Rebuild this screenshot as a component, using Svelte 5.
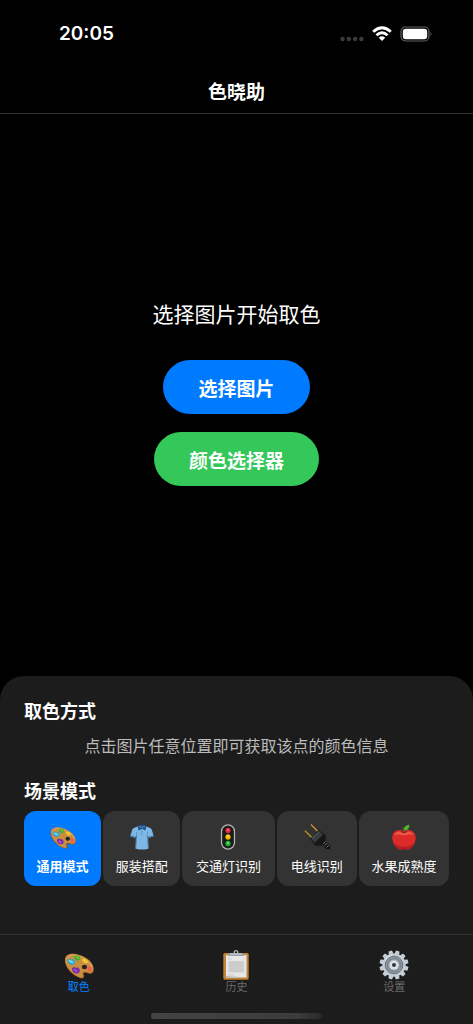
<script>
  const modes = ['通用模式', '服装搭配', '交通灯识别', '电线识别', '水果成熟度'];
  const icons = ['palette', 'shirt', 'light', 'plug', 'apple'];
  const tabs = [
    { label: '取色', icon: 'palette' },
    { label: '历史', icon: 'clipboard' },
    { label: '设置', icon: 'gear' }
  ];
  const teeth = Array.from({ length: 12 }, (_, i) => i * 30);
  let mode = $state(0);
  let tab = $state(0);
</script>

{#snippet glyph(name)}
  <svg class="glyph" viewBox="0 0 30 30" aria-hidden="true">
    {#if name === 'palette'}
      <path d="M1 11C1 6 5 4.500 10 5C18 5.400 29 11 29.500 19C30 23 27 25 24 23.500C21 22 19 22.500 20 25C21 28 19 29 16 28C8 25.500 1 18 1 11Z" fill="#8f531c" />
      <g transform="translate(0 1.500)">
        <path d="M1 8C1 4 5 2 10 2.300C18 3 29 9 29.500 16.500C30 21 27 22.500 24 21C20 19 17.500 21 19 23.500C20 26 18 26.500 16 26C8 23 1 15 1 8Z" fill="#c98e42" />
        <path d="M3 7C5 3 10 3 15 5C22 7.500 27 11.500 28 16" fill="none" stroke="#e0ab60" stroke-width="1" />
        <ellipse cx="20.500" cy="15.500" rx="2.600" ry="2.200" fill="#29221f" />
        <path d="M4 9C5 6 7 9 9 8C12 9 11 13 8 13C5 13 4 11 4 9Z" fill="#27acd7" stroke="#27acd7" stroke-width=".8" />
        <path d="M5 9L9 11" stroke="#8be3ed" stroke-width="1.500" />
        <path d="M10 5C11 3 13 5 14 4C17 5 17 9 14 9C11 9 11 7 10 5Z" fill="#41ad2c" />
        <path d="M12 5L15 7" stroke="#91de52" stroke-width="1" />
        <path d="M18 8C20 6 24 8 24 11C21 13 19 11 18 8Z" fill="#f1c72b" />
        <path d="M24 15C27 14 29 17 27 20C25 21 23 18 24 15Z" fill="#f25a4e" />
        <path d="M8 17C10 14 11 17 14 16C17 18 16 22 13 22C10 22 8 20 8 17Z" fill="#7b2bb0" />
        <path d="M10 18L13 20" stroke="#aa62d6" stroke-width="1.500" />
      </g>
    {:else if name === 'shirt'}
      <path d="M10.500 2.500L5 5Q3.500 6 3 9L1.500 14L7 16L9 13L8 28.500Q15 30.500 22 28.500L21 13L23 16L28.500 14L27 9Q26.500 6 25 5L19.500 2.500Z" fill="#7db7e5" />
      <path d="M9 13L8.500 9M21 13L21.500 9" stroke="#5593c5" stroke-width="1" fill="none" />
      <path d="M8.500 15L7.800 28.500M21.500 15L22.200 28.500" stroke="#629ece" stroke-width="1" fill="none" />
      <path d="M10 2Q15 0 20 2L19 7.500L15 5.500L11 7.500Z" fill="#244d86" />
      <path d="M11.500 2.500Q15 5 18.500 2.500" fill="none" stroke="#4d8dc4" stroke-width="1.200" />
      <path d="M15 6V13" stroke="#5b98cd" stroke-width="1" />
      <path d="M1.800 13.500L7 15.300M23 15.300L28.200 13.500" stroke="#3f7fba" stroke-width="1.300" />
    {:else if name === 'light'}
      <rect x="7.500" y="1" width="15" height="28" rx="7.500" fill="#252525" stroke="#b4b4b4" stroke-width="1.400" />
      <rect x="9.500" y="3" width="11" height="24" rx="5.500" fill="#171a19" />
      <circle cx="15" cy="7.500" r="3.100" fill="#df263b" /><circle cx="15" cy="7" r="1.200" fill="#ff7e86" />
      <circle cx="15" cy="15" r="3.100" fill="#eeb600" /><circle cx="15" cy="14.500" r="1.200" fill="#fff05c" />
      <circle cx="15" cy="22.500" r="3.100" fill="#20ae32" /><circle cx="15" cy="22" r="1.200" fill="#7af17e" />
    {:else if name === 'plug'}
      <path d="M1 8L9 16M8 1L16 9" stroke="#5e4519" stroke-width="2.400" />
      <path d="M1 7.500L9 15.500M8 .5L16 8.500" stroke="#c9a143" stroke-width="1.200" />
      <path d="M7 17L17 7L25 13L25 20L20 25L13 25Z" fill="#15171a" />
      <path d="M8 16L17 8L22 12L12 22Z" fill="#393c3f" />
      <path d="M9 17L18 9" stroke="#5c6063" stroke-width="1" />
      <path d="M20 22L24 19L30 24V29H26Z" fill="#101112" />
      <path d="M22 23L25 20M24 25L27 22M26 27L29 24" stroke="#8f9294" stroke-width="1" />
    {:else if name === 'apple'}
      <path d="M15 8.500C9 4.500 1.500 8 1.500 16C1.500 22 5.500 29.500 11 29.500Q13 29.500 15 28.800Q17 29.500 19 29.500C24.500 29.500 28.500 22 28.500 16C28.500 8 21 4.500 15 8.500Z" fill="#dd2b2a" />
      <path d="M4 13C5 8 11 8 15 10.500C19 8 24 8 26 13C21 11 18 13 15 13C11 13 8 11 4 13Z" fill="#ee5547" />
      <path d="M3 21Q8 27 15 26Q22 27 27 21Q24 29.500 19 29.500Q17 29.500 15 28.800Q13 29.500 11 29.500Q6 29.500 3 21Z" fill="#b51d23" />
      <path d="M11.500 8.500Q15 11.500 18.500 8.500" stroke="#8d1e1b" stroke-width="1.300" fill="none" />
      <path d="M15 10Q15 6 12 3.500" stroke="#6b3d1e" stroke-width="1.500" fill="none" />
      <path d="M14.500 7.500C14 2.500 18 1.500 21 .5C22 5 19 8 14.500 7.500Z" fill="#46a72b" />
      <path d="M16 6L20 2.500" stroke="#81cf48" stroke-width="1" />
    {:else if name === 'clipboard'}
      <rect x="2.500" y="3" width="25" height="27" rx="1.500" fill="#9a6427" />
      <rect x="2.500" y="3" width="25" height="26" rx="1.500" fill="#c08439" />
      <path d="M5 5H25.500V27.500H5Z" fill="#e6e6e7" />
      <path d="M5 26L25.500 27.500H5Z" fill="#babbbf" />
      <path d="M7 9H11M7 25H13" stroke="#c9cacc" stroke-width="1" />
      <rect x="7.500" y="11" width="15.500" height="11.500" fill="#cfd0d1" />
      <path d="M8 13H22.500M8 15.500H22.500M8 18H22.500M8 20.500H22.500" stroke="#c3c4c6" stroke-width=".8" />
      <circle cx="15" cy="2.500" r="1.800" fill="none" stroke="#aeb4b9" stroke-width="1.300" />
      <path d="M6.500 6Q7.500 3 11 3H19Q22.500 3 23.500 6Z" fill="#9aa4ac" />
      <path d="M9 4H21" stroke="#cbd1d7" stroke-width="1" />
    {:else}
      {#each teeth as angle}
        <path d="M12.300 5L13.200 .5H16.800L17.700 5Z" fill="#c5ced7" transform="rotate({angle + 15} 15 15)" />
      {/each}
      <circle cx="15" cy="15" r="11.500" fill="#c3cbd3" />
      <circle cx="15" cy="15" r="8.800" fill="#8b959f" stroke="#6b757f" stroke-width="1" />
      <circle cx="15" cy="15" r="6.300" fill="#a0aab3" stroke="#6f7983" stroke-width="1" />
      <circle cx="15" cy="15" r="4.500" fill="#dbe1e5" />
      <circle cx="15" cy="15" r="2" fill="#30363b" />
      <path d="M6 11Q8 6 13 5" fill="none" stroke="#e3e8ed" stroke-width="1" />
    {/if}
  </svg>
{/snippet}

<div class="app">
  <div class="status">
    <time>20:05</time>
    <div class="signals">
      <svg class="dots" viewBox="0 0 24 6" aria-hidden="true"><g fill="#3b3b3b"><circle cx="2.500" cy="3" r="2.200"/><circle cx="8.800" cy="3" r="2.200"/><circle cx="15.100" cy="3" r="2.200"/><circle cx="21.400" cy="3" r="2.200"/></g></svg>
      <svg class="wifi" viewBox="0 0 20 16" aria-hidden="true"><g fill="none" stroke="#fff" stroke-width="2.900"><path d="M1.200 5.800Q10-2.200 18.800 5.800"/><path d="M4.500 9.300Q10 4.300 15.500 9.300"/></g><path d="M6.800 11.700Q10 9 13.200 11.700L10 15Z" fill="#fff"/></svg>
      <svg class="battery" viewBox="0 0 33 17" aria-hidden="true"><rect x="1" y="1" width="28" height="14" rx="4.500" fill="none" stroke="#626262" stroke-width="1.200"/><rect x="2.800" y="2.800" width="24.400" height="10.400" rx="3" fill="#fff"/><path d="M30.500 6Q32.500 8 30.500 10Z" fill="#626262"/></svg>
    </div>
  </div>
  <header><h1>色晓助</h1></header>
  <main>
    <p>选择图片开始取色</p>
    <button class="pill blue">选择图片</button>
    <button class="pill green">颜色选择器</button>
  </main>
  <section class="panel">
    <h2>取色方式</h2>
    <p>点击图片任意位置即可获取该点的颜色信息</p>
    <h2 class="scene">场景模式</h2>
    <div class="modes">
      {#each modes as label, i}
        <button class:active={mode === i} aria-pressed={mode === i} onclick={() => (mode = i)}>
          {@render glyph(icons[i])}
          <span>{label}</span>
        </button>
      {/each}
    </div>
  </section>
  <nav>
    {#each tabs as item, i}
      <button class:current={tab === i} aria-current={tab === i ? 'page' : undefined} onclick={() => (tab = i)}>
        {@render glyph(item.icon)}
        <span>{item.label}</span>
      </button>
    {/each}
  </nav>
  <div class="home"><div></div></div>
</div>

<style>
  :global(body) { margin: 0; background: #000; }
  * { box-sizing: border-box; }
  .app {
    min-height: 100vh;
    display: flex;
    flex-direction: column;
    background: #000;
    color: #fff;
    font-family: Inter, "Noto Sans CJK SC", sans-serif;
  }
  h1, h2, p { margin: 0; }
  button { border: 0; padding: 0; font: inherit; color: inherit; cursor: pointer; }
  svg { display: block; }
  .status { height: 68px; padding: 0 40px 0 59px; display: flex; align-items: center; justify-content: space-between; }
  time { font-size: 19px; font-weight: 600; line-height: 24px; }
  .signals { display: flex; align-items: center; gap: 8px; }
  .dots { width: 24px; height: 6px; margin-top: 10px; }
  .wifi { width: 20px; height: 16px; }
  .battery { width: 33px; height: 17px; }
  header { height: 46px; padding-top: 4px; display: flex; justify-content: center; align-items: center; border-bottom: 1px solid #303030; }
  h1 { font-size: 19px; font-weight: 700; line-height: 28px; }
  main { flex: 1; padding-bottom: 4px; display: flex; flex-direction: column; align-items: center; justify-content: center; gap: 18px; }
  main p { font-size: 21px; line-height: 30px; margin-bottom: 12px; }
  .pill { height: 54px; padding: 0 35px; border-radius: 27px; font-size: 19px; font-weight: 700; }
  .blue { background: #007aff; }
  .green { background: #34c759; }
  .panel { background: #1c1c1c; border-radius: 24px 24px 0 0; padding: 24px 24px 48px; }
  h2 { font-size: 18px; font-weight: 700; line-height: 24px; }
  .panel p { font-size: 16px; line-height: 24px; margin-top: 10px; text-align: center; color: #bbb; }
  .scene { margin-top: 22px; }
  .modes { display: grid; grid-template-columns: 77fr 77fr 92fr 80fr 90fr; gap: 2px; margin-top: 7px; }
  .modes button { height: 75px; padding-top: 2px; border-radius: 12px; background: #333; display: flex; flex-direction: column; align-items: center; justify-content: center; gap: 6px; font-size: 13px; line-height: 20px; white-space: nowrap; }
  .modes .glyph { width: 26px; height: 26px; }
  .modes .active { background: #007aff; font-weight: 700; }
  nav { height: 74px; display: grid; grid-template-columns: repeat(3, 1fr); background: #1c1c1c; border-top: 1px solid #333; }
  nav button { background: none; display: flex; flex-direction: column; align-items: center; justify-content: flex-start; padding-top: 15px; font-size: 11px; line-height: 15px; color: #6b6b6b; }
  nav .glyph { width: 30px; height: 30px; }
  nav .current { color: #0874e8; font-weight: 500; }
  .home { height: 16px; background: #1c1c1c; display: flex; justify-content: center; align-items: flex-start; padding-top: 5px; }
  .home div { width: 36%; height: 6px; border-radius: 3px; background: linear-gradient(90deg, #444, #3c3c3c 85%, #2b2b2b); }
</style>
